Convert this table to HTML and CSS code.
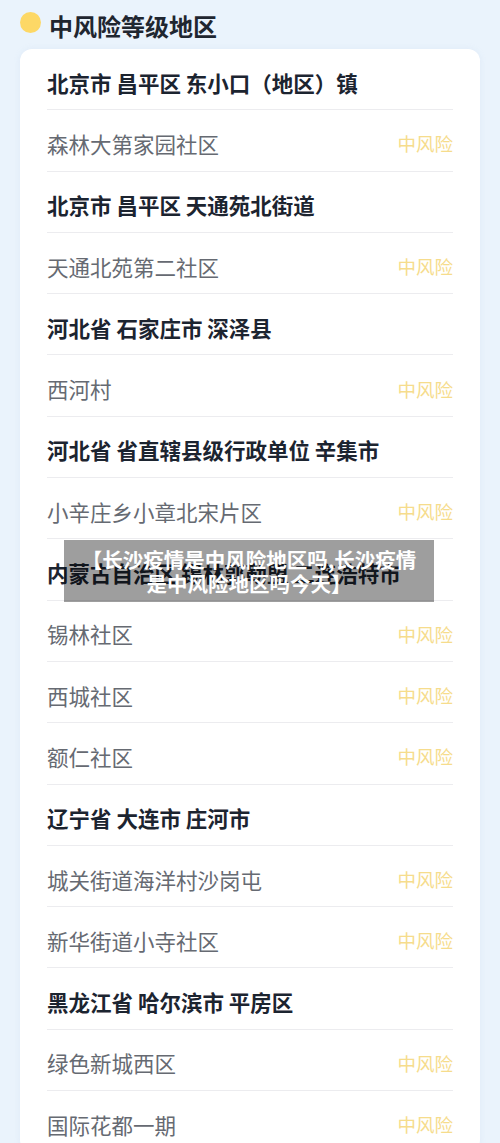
FILE: index.html
```html
<!DOCTYPE html>
<html lang="zh-CN">
<head>
    <meta charset="UTF-8">
    <meta name="viewport" content="width=device-width, initial-scale=1.0">
    <title>中风险等级地区</title>
    <link rel="stylesheet" href="styles.css">
</head>
<body>
    <div class="page">
        <h1 class="title"><span class="dot"></span>中风险等级地区</h1>

        <div class="card">
            <div class="row city">北京市 昌平区 东小口（地区）镇</div>
            <div class="row"><span>森林大第家园社区</span><span class="level">中风险</span></div>
            <div class="row city">北京市 昌平区 天通苑北街道</div>
            <div class="row"><span>天通北苑第二社区</span><span class="level">中风险</span></div>
            <div class="row city">河北省 石家庄市 深泽县</div>
            <div class="row"><span>西河村</span><span class="level">中风险</span></div>
            <div class="row city">河北省 省直辖县级行政单位 辛集市</div>
            <div class="row"><span>小辛庄乡小章北宋片区</span><span class="level">中风险</span></div>
            <div class="row city">内蒙古自治区 锡林郭勒盟 二连浩特市</div>
            <div class="row"><span>锡林社区</span><span class="level">中风险</span></div>
            <div class="row"><span>西城社区</span><span class="level">中风险</span></div>
            <div class="row"><span>额仁社区</span><span class="level">中风险</span></div>
            <div class="row city">辽宁省 大连市 庄河市</div>
            <div class="row"><span>城关街道海洋村沙岗屯</span><span class="level">中风险</span></div>
            <div class="row"><span>新华街道小寺社区</span><span class="level">中风险</span></div>
            <div class="row city">黑龙江省 哈尔滨市 平房区</div>
            <div class="row"><span>绿色新城西区</span><span class="level">中风险</span></div>
            <div class="row"><span>国际花都一期</span><span class="level">中风险</span></div>
        </div>
    </div>

    <!-- caption laid over the picture -->
    <div class="caption">【长沙疫情是中风险地区吗,长沙疫情是中风险地区吗今天】</div>
</body>
</html>
```

FILE: styles.css
```css
body {
    margin: 0;
    background: #eaf3fc;
    font-family: "Noto Sans CJK SC", "Noto Sans", sans-serif;
    color: #1c2430;
}

.page {
    padding: 10px 20px 0;
}

.title {
    display: flex;
    align-items: center;
    gap: 8px;
    height: 30px;
    margin: 0 0 9px;
    font-size: 24px;
    font-weight: 700;
    color: #1f2630;
}

.dot {
    width: 21px;
    height: 21px;
    border-radius: 50%;
    background: #fdd866;
    margin-top: -5px;
}

.card {
    background: #fff;
    border-radius: 12px;
    padding: 0 27px;
    box-shadow: 0 0 6px rgba(160, 190, 220, 0.15);
}

.row {
    display: flex;
    align-items: center;
    justify-content: space-between;
    box-sizing: border-box;
    height: 61.3px;
    padding-top: 6px;
    border-bottom: 1px solid #ececef;
    font-size: 21.5px;
    color: #666a72;
    white-space: nowrap;
}

.row.city {
    font-weight: 700;
    color: #1c2430;
}

.level {
    font-size: 18.5px;
    color: #f6dc8c;
}

/* Caption overlay */
.caption {
    position: absolute;
    top: 540px;
    left: 64px;
    width: 370px;
    box-sizing: border-box;
    padding: 7px 8px;
    background: rgba(0, 0, 0, 0.38);
    color: #fff;
    font-size: 20.5px;
    font-weight: 700;
    line-height: 24px;
    text-align: center;
}
```
